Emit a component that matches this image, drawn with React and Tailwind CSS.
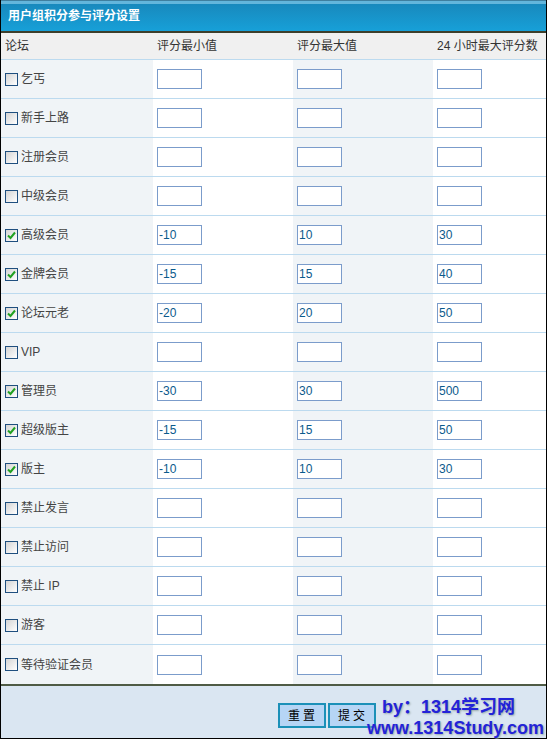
const rows = [
  { name: '乞丐', on: false },
  { name: '新手上路', on: false },
  { name: '注册会员', on: false },
  { name: '中级会员', on: false },
  { name: '高级会员', on: true, min: '-10', max: '10', day: '30' },
  { name: '金牌会员', on: true, min: '-15', max: '15', day: '40' },
  { name: '论坛元老', on: true, min: '-20', max: '20', day: '50' },
  { name: 'VIP', on: false },
  { name: '管理员', on: true, min: '-30', max: '30', day: '500' },
  { name: '超级版主', on: true, min: '-15', max: '15', day: '50' },
  { name: '版主', on: true, min: '-10', max: '10', day: '30' },
  { name: '禁止发言', on: false },
  { name: '禁止访问', on: false },
  { name: '禁止 IP', on: false },
  { name: '游客', on: false },
  { name: '等待验证会员', on: false },
]

function Check({ on }) {
  return (
    <span className="w-[13px] h-[13px] border border-[#1f4f7f] bg-[linear-gradient(135deg,#d4d4d4,#ffffff)] flex items-center justify-center shrink-0">
      {on && (
        <svg width="9" height="9" viewBox="0 0 9 9">
          <path d="M1 4.5 L3.5 7 L8 1.5" stroke="#21a121" strokeWidth="2" fill="none" />
        </svg>
      )}
    </span>
  )
}

function Box({ value }) {
  return (
    <input
      defaultValue={value || ''}
      className="w-[45px] h-[20px] border border-[#7b9ccb] bg-white px-[1px] text-[12px] text-[#0b5a8c] outline-none"
    />
  )
}

export default function App() {
  return (
    <div className="w-[547px] h-[739px] bg-white text-[12px] text-[#333] flex flex-col border-l border-r border-b border-black font-['Liberation_Sans','Noto_Sans_CJK_SC',sans-serif]">
      {/* Title bar */}
      <div className="h-[33px] shrink-0 flex items-center pl-[7px] border-b-2 border-[#3d3f2c] bg-[linear-gradient(#3f7f9f_0,#3f7f9f_1px,#63b6dc_1px,#63b6dc_4px,#1889bd_4px,#17a0d8_100%)]">
        <span className="text-white font-bold text-[12px]">用户组积分参与评分设置</span>
      </div>

      {/* Column headers */}
      <div className="h-[27px] shrink-0 grid grid-cols-[152px_140px_140px_1fr] items-center bg-[#f0f0f0] border-b border-[#bcdaef]">
        <span className="pl-[4px]">论坛</span>
        <span className="pl-[4px]">评分最小值</span>
        <span className="pl-[4px]">评分最大值</span>
        <span className="pl-[4px]">24 小时最大评分数</span>
      </div>

      {/* Rows */}
      {rows.map((r, i) => (
        <div
          key={r.name}
          className={`h-[39px] shrink-0 grid grid-cols-[152px_140px_140px_1fr] ${i < rows.length - 1 ? 'border-b border-[#bcdaef]' : ''}`}
        >
          <div className="bg-[#f0f4f7] flex items-center gap-[3px] pl-[4px] text-[#444]">
            <Check on={r.on} />
            <span>{r.name}</span>
          </div>
          <div className="bg-white flex items-center pl-[4px]"><Box value={r.min} /></div>
          <div className="bg-[#f0f4f7] flex items-center pl-[4px]"><Box value={r.max} /></div>
          <div className="bg-white flex items-center pl-[4px]"><Box value={r.day} /></div>
        </div>
      ))}

      {/* Footer */}
      <div className="flex-1 relative bg-[#dae6f2] border-t-2 border-[#4f5b45]">
        <div className="absolute left-[277px] top-[17px] flex gap-[2px]">
          <button className="w-[48px] h-[25px] border-2 border-[#1b90b8] bg-[#b6d5f5] text-black text-[12px] tracking-[3px] pl-[2px]">重置</button>
          <button className="w-[48px] h-[25px] border-2 border-[#1b90b8] bg-[#b6d5f5] text-black text-[12px] tracking-[3px] pl-[2px]">提交</button>
        </div>
        <div className="absolute left-[366px] top-[11px] flex flex-col items-center leading-[21px] font-bold text-[#2323d8] text-[18px] [text-shadow:1px_1px_2px_#9aa]">
          <span className="pr-[14px]">by：1314学习网</span>
          <span>www.1314Study.com</span>
        </div>
      </div>
    </div>
  )
}
